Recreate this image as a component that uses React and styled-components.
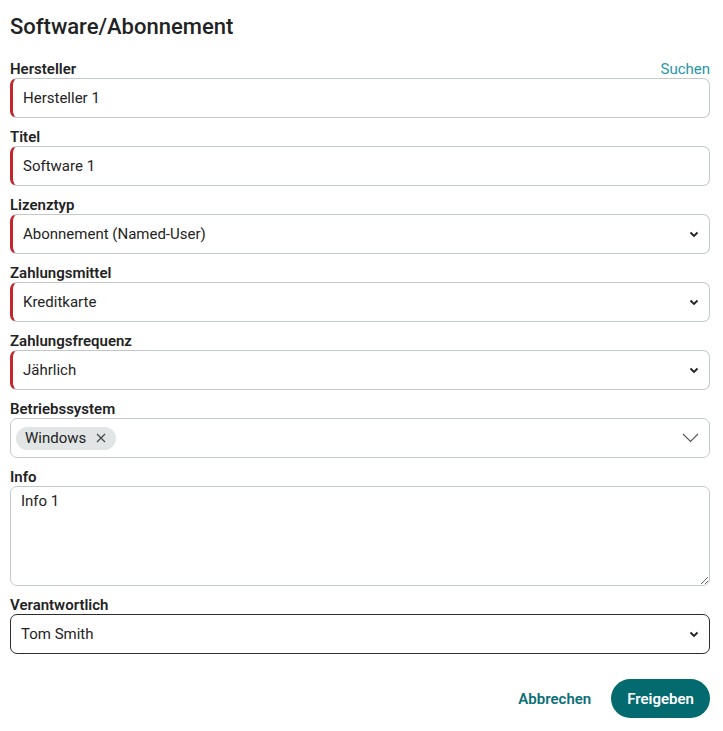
import React from 'react'
import styled, { createGlobalStyle } from 'styled-components'

const GlobalStyle = createGlobalStyle`
  body {
    margin: 0;
    font-family: Roboto, "Liberation Sans", sans-serif;
    color: #1f2324;
    background: #fff;
  }
  * { box-sizing: border-box; }
`

const Page = styled.div`
  padding: 13px 13px 12px 10px;
  width: 723px;
`

const Title = styled.h1`
  margin: 0 0 19px;
  font-size: 22px;
  font-weight: 500;
  line-height: 28px;
  color: #1f2324;
`

const Form = styled.div`
  display: flex;
  flex-direction: column;
  gap: 10px;
`

const Field = styled.div`
  display: flex;
  flex-direction: column;
`

const LabelRow = styled.div`
  display: flex;
  justify-content: space-between;
  align-items: flex-end;
  height: 18px;
  line-height: 18px;
`

const Label = styled.label`
  font-size: 15px;
  font-weight: 600;
  color: #1f2324;
`

const Link = styled.a`
  font-size: 15px;
  color: #2896a8;
  text-decoration: none;
  cursor: pointer;
`

const Box = styled.div`
  position: relative;
  height: 40px;
  border: 1px solid ${p => (p.$dark ? '#2a2e2f' : '#c3c9c9')};
  border-left: ${p => (p.$required ? '3px solid #c4262e' : `1px solid ${p.$dark ? '#2a2e2f' : '#c3c9c9'}`)};
  border-radius: 7px;
  display: flex;
  align-items: center;
  padding: 0 10px;
  font-size: 15px;
  color: #1f2324;
  background: #fff;
`

const Value = styled.span`
  flex: 1;
`

const Chevron = () => (
  <svg width="10" height="7" viewBox="0 0 10 7">
    <path d="M1.5 1.5 L5 5 L8.5 1.5" fill="none" stroke="#222" strokeWidth="1.8" />
  </svg>
)

const BigChevron = () => (
  <svg width="17" height="10" viewBox="0 0 17 10">
    <path d="M1 1 L8.5 8.5 L16 1" fill="none" stroke="#555" strokeWidth="1.1" />
  </svg>
)

const Chip = styled.span`
  display: inline-flex;
  align-items: center;
  gap: 10px;
  height: 23px;
  padding: 0 10px 0 9px;
  margin-left: -5px;
  border-radius: 12px;
  background: #e1e5e5;
  font-size: 15px;
  color: #1f2324;
`

const ChipX = () => (
  <svg width="10" height="10" viewBox="0 0 10 10">
    <path d="M1 1 L9 9 M9 1 L1 9" stroke="#444" strokeWidth="1.2" />
  </svg>
)

const TextArea = styled.textarea`
  height: 100px;
  border: 1px solid #c3c9c9;
  border-radius: 7px;
  padding: 5px 10px;
  font-family: Roboto, "Liberation Sans", sans-serif;
  font-size: 15px;
  color: #1f2324;
  resize: vertical;
  outline: none;
`

const Actions = styled.div`
  display: flex;
  justify-content: flex-end;
  align-items: center;
  gap: 20px;
  margin-top: 25px;
`

const TextButton = styled.button`
  border: none;
  background: none;
  font-family: inherit;
  font-size: 15px;
  font-weight: 600;
  color: #0b6f77;
  padding: 0;
  cursor: pointer;
`

const PrimaryButton = styled.button`
  border: none;
  height: 39px;
  padding: 0 16px;
  border-radius: 20px;
  background: #036a70;
  color: #fff;
  font-family: inherit;
  font-size: 15px;
  font-weight: 600;
  cursor: pointer;
`

const fields = [
  { label: 'Hersteller', value: 'Hersteller 1', link: 'Suchen' },
  { label: 'Titel', value: 'Software 1' },
  { label: 'Lizenztyp', value: 'Abonnement (Named-User)', select: true },
  { label: 'Zahlungsmittel', value: 'Kreditkarte', select: true },
  { label: 'Zahlungsfrequenz', value: 'Jährlich', select: true },
]

const App = () => {
  return (
    <>
      <GlobalStyle />
      <Page>
        <Title>Software/Abonnement</Title>
        <Form>
          {fields.map(f => (
            <Field key={f.label}>
              <LabelRow>
                <Label>{f.label}</Label>
                {f.link && <Link>{f.link}</Link>}
              </LabelRow>
              <Box $required>
                <Value>{f.value}</Value>
                {f.select && <Chevron />}
              </Box>
            </Field>
          ))}
          <Field>
            <LabelRow>
              <Label>Betriebssystem</Label>
            </LabelRow>
            <Box>
              <Value>
                <Chip>Windows <ChipX /></Chip>
              </Value>
              <BigChevron />
            </Box>
          </Field>
          <Field>
            <LabelRow>
              <Label>Info</Label>
            </LabelRow>
            <TextArea defaultValue="Info 1" />
          </Field>
          <Field>
            <LabelRow>
              <Label>Verantwortlich</Label>
            </LabelRow>
            <Box $dark>
              <Value>Tom Smith</Value>
              <Chevron />
            </Box>
          </Field>
        </Form>
        <Actions>
          <TextButton>Abbrechen</TextButton>
          <PrimaryButton>Freigeben</PrimaryButton>
        </Actions>
      </Page>
    </>
  )
}

export default App
